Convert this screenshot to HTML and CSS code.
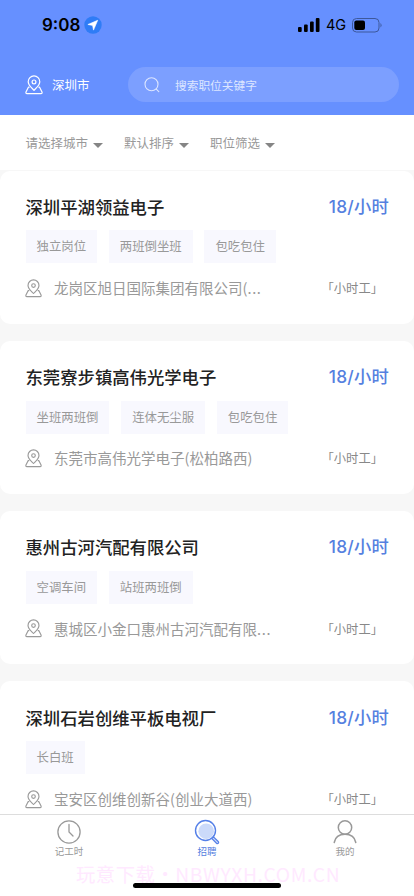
FILE: index.html
```html
<!DOCTYPE html>
<html lang="zh-CN">
<head>
<meta charset="utf-8">
<meta name="viewport" content="width=device-width, initial-scale=1">
<title>招聘</title>
<link rel="stylesheet" href="styles.css">
</head>
<body>
<svg class="defs" width="0" height="0" aria-hidden="true">
  <symbol id="pin" viewBox="0 0 18 20">
    <g fill="none" stroke="currentColor" stroke-width="1.2" stroke-linejoin="round" stroke-linecap="round">
      <path d="M9 15.300C7.200 13.200 3.200 10.300 3.200 6.700a5.800 5.800 0 0 1 11.600 0C14.800 10.300 10.800 13.200 9 15.300Z"/>
      <circle cx="9" cy="6.900" r="1.900"/>
      <path d="M4.100 12.200H3.400L1 17Q.5 18.600 2 18.600H16Q17.500 18.600 17 17L14.600 12.200H13.900"/>
    </g>
  </symbol>
</svg>
<div class="app">
  <header class="header">
    <div class="status">
      <span class="time">9:08</span>
      <svg class="nav-arrow" viewBox="0 0 18 18"><circle cx="9" cy="9" r="8.700" fill="#2f7cf6"/><path d="M13.700 4.300 3.900 8.500 8.600 9.400 9.500 14.100Z" fill="#fff" stroke="#fff" stroke-width=".6" stroke-linejoin="round"/></svg>
      <svg class="signal" viewBox="0 0 22 14"><rect x="0" y="9" width="3.700" height="5" rx="1"/><rect x="6" y="6.500" width="3.700" height="7.500" rx="1"/><rect x="12" y="3.500" width="3.700" height="10.500" rx="1"/><rect x="17.800" y="0" width="3.700" height="14" rx="1"/></svg>
      <span class="net">4G</span>
      <svg class="battery" viewBox="0 0 30 15"><rect x=".5" y=".5" width="26.500" height="13.500" rx="4" fill="none" stroke="#3d589b"/><rect x="2.300" y="2.600" width="10.700" height="9.300" rx="2"/><path d="M28.500 5q2 2.200 0 4.500z" fill="#3d589b"/></svg>
    </div>
    <div class="search-row">
      <svg class="pin"><use href="#pin"/></svg>
      <span class="city">深圳市</span>
      <div class="search">
        <svg class="lens" viewBox="0 0 16 16" fill="none" stroke="#dde6ff" stroke-width="1.100" stroke-linecap="round"><circle cx="7.500" cy="7.300" r="6.500"/><path d="m12.300 12.100 2.500 2.500"/></svg>
        <span>搜索职位关键字</span>
      </div>
    </div>
  </header>
  <nav class="filters">
    <span class="filter">请选择城市</span><span class="filter">默认排序</span><span class="filter">职位筛选</span>
  </nav>
  <main class="list">
    <article class="card">
      <div class="row"><h2>深圳平湖领益电子</h2><span class="price">18/小时</span></div>
      <div class="tags"><span>独立岗位</span><span>两班倒坐班</span><span>包吃包住</span></div>
      <div class="row place"><svg class="pin"><use href="#pin"/></svg><span class="addr">龙岗区旭日国际集团有限公司(<i>...</i></span><span class="type">「小时工」</span></div>
    </article>
    <article class="card">
      <div class="row"><h2>东莞寮步镇高伟光学电子</h2><span class="price">18/小时</span></div>
      <div class="tags"><span>坐班两班倒</span><span>连体无尘服</span><span>包吃包住</span></div>
      <div class="row place"><svg class="pin"><use href="#pin"/></svg><span class="addr">东莞市高伟光学电子(松柏路西)</span><span class="type">「小时工」</span></div>
    </article>
    <article class="card">
      <div class="row"><h2>惠州古河汽配有限公司</h2><span class="price">18/小时</span></div>
      <div class="tags"><span>空调车间</span><span>站班两班倒</span></div>
      <div class="row place"><svg class="pin"><use href="#pin"/></svg><span class="addr">惠城区小金口惠州古河汽配有限<i>...</i></span><span class="type">「小时工」</span></div>
    </article>
    <article class="card">
      <div class="row"><h2>深圳石岩创维平板电视厂</h2><span class="price">18/小时</span></div>
      <div class="tags"><span>长白班</span></div>
      <div class="row place"><svg class="pin"><use href="#pin"/></svg><span class="addr">宝安区创维创新谷(创业大道西)</span><span class="type">「小时工」</span></div>
    </article>
  </main>
  <footer class="tabbar">
    <div class="tab"><svg viewBox="0 0 26 26" fill="none" stroke="#999" stroke-width="1.300" stroke-linecap="round"><circle cx="13" cy="13" r="11.100"/><path d="M13 5.500V13l4 4"/></svg>记工时</div>
    <div class="tab active"><svg viewBox="0 0 26 26" fill="none" stroke="#5580e8" stroke-width="1.400"><circle cx="11.500" cy="11.500" r="10" fill="#fff"/><circle cx="12.200" cy="12.200" r="7.800" fill="#cbdafa" stroke="none"/><path d="m17.800 19.400 1.600-1.600 4.800 4.700q.9 1 .1 1.800-.9.700-1.800-.1Z" fill="#cbdafa" stroke-width="1.200"/></svg>招聘</div>
    <div class="tab"><svg viewBox="0 0 26 26" fill="none" stroke="#999" stroke-width="1.500" stroke-linecap="round"><circle cx="13" cy="8.500" r="6.700"/><path d="M2.200 23.500C3.200 18 7.500 15.300 13 15.300S22.800 18 23.800 23.500"/></svg>我的</div>
    <div class="watermark">玩意下载・NBWYXH.COM.CN</div>
    <div class="home"></div>
  </footer>
</div>
</body>
</html>
```

FILE: styles.css
```css
* { box-sizing: border-box; }
body {
  margin: 0;
  background: #f7f7f7;
  font-family: "Noto Sans CJK SC", "Noto Sans", sans-serif;
  color: #999;
}
svg { display: block; flex: none; }
.defs { position: absolute; }
.app { height: 896px; display: flex; flex-direction: column; overflow: hidden; position: relative; }

.header { height: 115px; flex: none; background: #6690ff; color: #fff; }
.status { height: 50px; display: flex; align-items: center; padding-left: 42px; color: #000; }
.time { width: 42px; font: 600 17px/20px Inter, sans-serif; letter-spacing: 0; }
.nav-arrow { width: 18px; height: 18px; }
.signal { width: 22px; height: 14px; margin-left: 196px; }
.net { width: 26px; margin-left: 6px; font: 400 14.500px/20px Inter, sans-serif; }
.battery { width: 30px; height: 15px; }
.search-row { display: flex; align-items: center; margin-top: 17px; padding: 0 15px 0 25px; height: 35px; }
.pin { width: 17px; height: 19px; color: #999; }
.header .pin { color: #fff; width: 18px; height: 20px; }
.city { width: 76px; margin-left: 9px; font-size: 12.5px; line-height: 20px; }
.search {
  flex: 1; height: 35px; display: flex; align-items: center;
  padding-left: 16px; gap: 15px; border-radius: 18px;
  background: #7c9fff; color: #dde6ff; font-size: 11.7px;
}
.search span { padding-bottom: 1px; }
.lens { width: 16px; height: 16px; }

.filters { height: 55px; flex: none; display: flex; align-items: center; padding-left: 25.5px; background: #fff; font-size: 12.5px; gap: 21px; }
.filter { display: flex; align-items: center; }
.filter::after { content: ""; margin: 5px 0 0 5px; border: 5px solid transparent; border-top-color: #858585; border-bottom: 0; }

.list { flex: 1; min-height: 0; overflow: hidden; padding-top: .6px; display: flex; flex-direction: column; gap: 17.300px; }
.card { flex: none; height: 153px; padding: 23.200px 25px 0 25.500px; border-radius: 10px; background: #fff; }
.row { display: flex; align-items: center; height: 26px; }
h2 { flex: 1; margin: 0; font-size: 17.350px; font-weight: 500; line-height: 26px; color: #222; }
.price { font: 500 17.300px/26px Inter, "Noto Sans CJK SC", sans-serif; letter-spacing: .25px; color: #5580e0; }
.tags { display: flex; gap: 12px; margin-top: 10.500px; }
.tags span { height: 33px; line-height: 32px; padding: 0 11px; background: #f8f8fe; font-size: 12.400px; }
.tags span + span { margin-left: -.3px; }
.place { margin-top: 11.400px; }
.place .pin { margin: 1px 0 0 -.5px; }
.addr { flex: 1; margin-left: 12px; font-size: 14.500px; }
.addr i { font-style: normal; letter-spacing: .7px; }
.type { font-size: 12.300px; margin: 1px 6px 0 0; color: #888; }

.tabbar { height: 82px; flex: none; display: flex; background: #fff; border-top: 1px solid #ddd; position: relative; }
.tab { flex: 1; display: flex; flex-direction: column; align-items: center; padding-top: 4px; font-size: 9.500px; line-height: 13px; }
.tab svg { width: 26px; height: 26px; }
.active { color: #5580e0; }
.watermark { position: absolute; left: 76px; top: 45px; font-size: 19.300px; line-height: 28px; letter-spacing: .58px; color: #ffe9ff; white-space: nowrap; }
.home { position: absolute; left: 133px; top: 68px; width: 148px; height: 5px; border-radius: 3px; background: #000; }
```
